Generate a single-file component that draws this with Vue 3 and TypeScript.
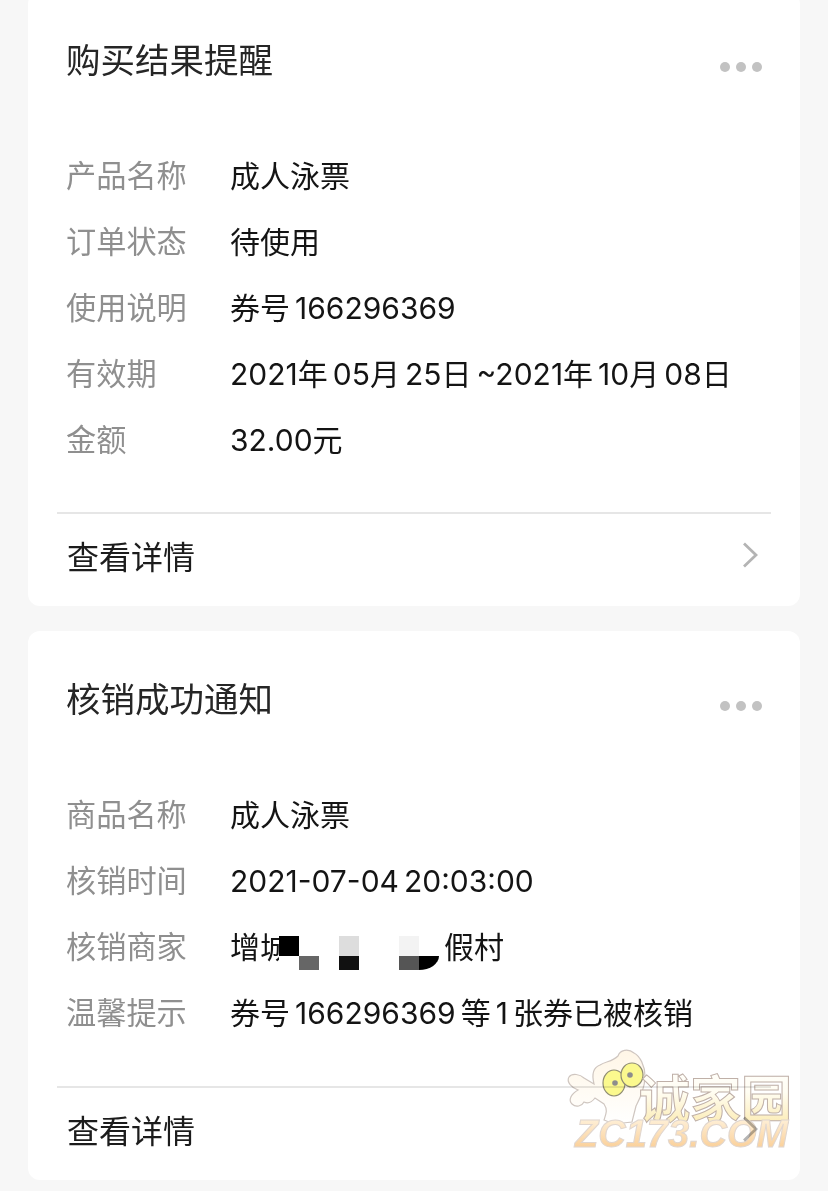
<script setup lang="ts">
interface Row {
  label: string
  value?: string
  masked?: boolean
}

const buyRows: Row[] = [
  { label: '产品名称', value: '成人泳票' },
  { label: '订单状态', value: '待使用' },
  { label: '使用说明', value: '券号 166296369' },
  { label: '有效期', value: '2021年 05月 25日 ~2021年 10月 08日' },
  { label: '金额', value: '32.00元' }
]

const verifyRows: Row[] = [
  { label: '商品名称', value: '成人泳票' },
  { label: '核销时间', value: '2021-07-04 20:03:00' },
  { label: '核销商家', masked: true },
  { label: '温馨提示', value: '券号 166296369 等 1 张券已被核销' }
]

const cards = [
  { title: '购买结果提醒', rows: buyRows, first: true },
  { title: '核销成功通知', rows: verifyRows, first: false }
]

// 打码的马赛克格子，8 列 2 行
const mosaic = [
  '#000', '#fff', '#fff', '#ddd', '#fff', '#fff', '#f3f3f3', '#fff',
  '#fff', '#666', '#fff', '#111', '#fff', '#fff', '#555', '#000'
]
</script>

<template>
  <div class="page">
    <section v-for="card in cards" :key="card.title" class="card" :class="{ first: card.first }">
      <header class="card-head">
        <h2 class="card-title">{{ card.title }}</h2>
        <div class="dots"><i></i><i></i><i></i></div>
      </header>

      <div class="rows">
        <div v-for="row in card.rows" :key="row.label" class="row">
          <span class="row-label">{{ row.label }}</span>
          <span v-if="!row.masked" class="row-value">{{ row.value }}</span>
          <span v-else class="row-value masked">
            <span class="clip">增城</span>
            <span class="mosaic">
              <i
                v-for="(c, i) in mosaic"
                :key="i"
                :class="{ curved: i === 15 }"
                :style="{ background: c }"
              ></i>
            </span>
            <span class="after">假村</span>
          </span>
        </div>
      </div>

      <footer class="card-foot">
        <span>查看详情</span>
        <svg class="chevron" width="16" height="26" viewBox="0 0 16 26">
          <path d="M2 1.5 L14 13 L2 24.5" fill="none" stroke="#b4b4b4" stroke-width="2.8" />
        </svg>
      </footer>
    </section>

    <svg class="watermark" width="280" height="151" viewBox="0 0 280 151">
      <defs>
        <linearGradient id="wmFill" x1="0" y1="0" x2="0" y2="1">
          <stop offset="0" stop-color="#ffffff" />
          <stop offset="0.45" stop-color="#fffdf2" />
          <stop offset="1" stop-color="#fbe7a4" />
        </linearGradient>
        <linearGradient id="wmFill2" x1="0" y1="0" x2="0" y2="1">
          <stop offset="0" stop-color="#fff6e4" />
          <stop offset="1" stop-color="#f9c88a" />
        </linearGradient>
        <linearGradient id="wmBody" x1="0" y1="0" x2="0" y2="1">
          <stop offset="0" stop-color="#fff6e6" />
          <stop offset="1" stop-color="#ffffff" />
        </linearGradient>
      </defs>
      <!-- 吉祥物 -->
      <path
        d="M70 16 C72 10 80 8 86 13 C92 16 97 26 97 36 C97 48 92 58 88 66 L84 82 L66 84 L56 80 C58 74 60 70 56 64 L47 58 C44 62 40 64 36 62 C34 66 28 68 24 64 C20 60 23 54 30 50 C24 48 18 42 21 37 C24 33 32 34 36 38 L46 44 C44 36 44 28 52 25 C58 21 64 22 70 16 Z"
        fill="url(#wmBody)"
        stroke="#cfc6c0"
        stroke-width="1.2"
      />
      <ellipse cx="66" cy="43" rx="11" ry="13" fill="#fbf98e" stroke="#8f8c74" stroke-width="1.2" />
      <ellipse cx="84" cy="35" rx="11" ry="12" fill="#fbf98e" stroke="#8f8c74" stroke-width="1.2" />
      <circle cx="67" cy="43" r="2.8" fill="#8d8d8d" />
      <circle cx="82" cy="35" r="2.8" fill="#8d8d8d" />
      <text x="91" y="78" class="wm-cn" fill="url(#wmFill)" stroke="#bfb0a8">诚家园</text>
      <text x="27" y="107" class="wm-en" fill="url(#wmFill2)" stroke="#e0d6cf">ZC173.COM</text>
    </svg>
  </div>
</template>

<style>
body {
  margin: 0;
  background: #f7f7f7;
}
</style>

<style scoped>
.page {
  position: relative;
  height: 1191px;
  overflow: hidden;
  background: #f7f7f7;
  font-family: Inter, 'Noto Sans CJK SC', sans-serif;
}

.card {
  box-sizing: border-box;
  width: 772px;
  height: 549px;
  margin: 0 0 0 28px;
  background: #fff;
  border-radius: 12px;
}

.card.first {
  height: 614px;
  margin-top: -8px;
  margin-bottom: 25px;
}

.card-head {
  display: flex;
  justify-content: space-between;
  height: 164px;
  padding: 49px 38px 0 38px;
  box-sizing: border-box;
}

.card-title {
  margin: 0;
  font-size: 34.5px;
  line-height: 40px;
  font-weight: 400;
  color: #262626;
}

.dots {
  display: flex;
  gap: 6px;
  margin-top: 21px;
}

.dots i {
  width: 10px;
  height: 10px;
  border-radius: 50%;
  background: #c2c2c2;
}

.rows {
  display: flex;
  flex-direction: column;
  gap: 26px;
  padding: 0 0 53px 38px;
}

.first .rows {
  padding-bottom: 52px;
}

.row {
  display: flex;
  height: 40px;
  line-height: 40px;
  font-size: 30.2px;
}

.row-label {
  width: 164px;
  flex: none;
  color: #8f8f8f;
}

.row-value {
  color: #141414;
  font-size: 30px;
  white-space: pre;
  word-spacing: -3.4px;
}

.masked {
  display: flex;
}

.clip {
  width: 49px;
  overflow: hidden;
}

.mosaic {
  display: grid;
  grid-template-columns: repeat(8, 20px);
  grid-template-rows: 20px 14px;
  width: 160px;
  height: 34px;
  margin: 9px 5px 0 0;
}

.curved {
  border-bottom-right-radius: 100%;
}

.card-foot {
  display: flex;
  justify-content: space-between;
  align-items: center;
  height: 82px;
  margin: 0 29px;
  padding: 0 13px 4px 10px;
  border-top: 2px solid #e6e6e6;
  font-size: 32px;
  color: #1c1c1c;
}

.watermark {
  position: absolute;
  left: 548px;
  top: 1040px;
  mix-blend-mode: multiply;
}

.wm-cn {
  font-family: 'Noto Sans CJK SC', sans-serif;
  font-size: 51px;
  font-weight: 700;
  stroke-width: 1;
}

.wm-en {
  font-family: 'Liberation Sans', sans-serif;
  font-size: 38px;
  font-style: italic;
  font-weight: 700;
  stroke-width: 1;
}
</style>
